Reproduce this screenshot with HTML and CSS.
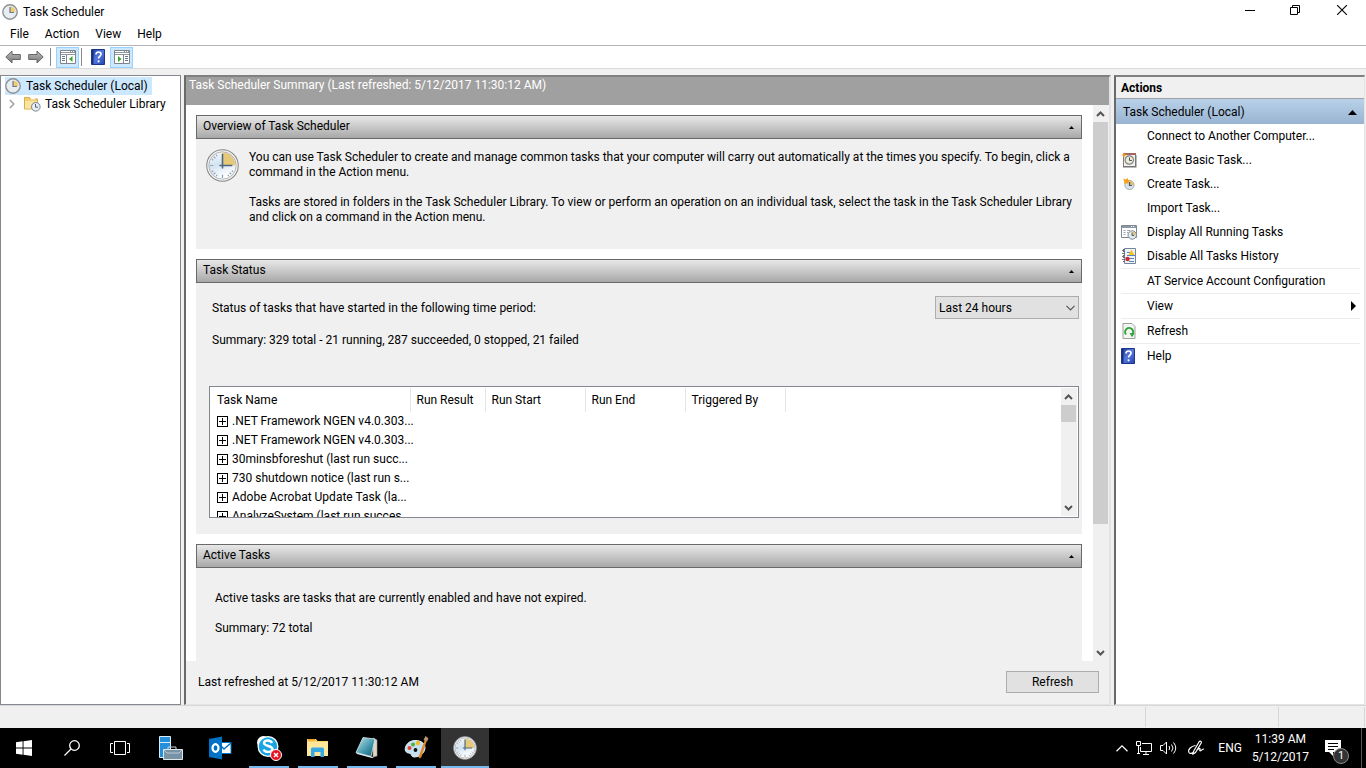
FILE: index.html
```html
<!DOCTYPE html>
<html lang="en">
<head>
  <meta charset="UTF-8" />
  <meta name="viewport" content="width=device-width, initial-scale=1.0" />
  <title>Task Scheduler</title>
  <link rel="stylesheet" href="styles.css">
</head>
<body>
  <!-- shared icons -->
  <svg class="defs" width="0" height="0" aria-hidden="true">
    <defs>
      <linearGradient id="face" x1="0" y1="0" x2="0.4" y2="1">
        <stop offset="0" stop-color="#fff" />
        <stop offset="0.5" stop-color="#d3e3f1" />
        <stop offset="1" stop-color="#fff" />
      </linearGradient>
      <linearGradient id="arrow" x1="0" y1="0" x2="0" y2="1">
        <stop offset="0" stop-color="#bbb" />
        <stop offset="1" stop-color="#777" />
      </linearGradient>
      <linearGradient id="blue" x1="0" y1="0" x2="1" y2="1">
        <stop offset="0" stop-color="#1c3c9c" />
        <stop offset="0.5" stop-color="#5578dd" />
        <stop offset="1" stop-color="#2343ad" />
      </linearGradient>
      <linearGradient id="note" x1="0" y1="0" x2="1" y2="1">
        <stop offset="0" stop-color="#c5e6ec" />
        <stop offset="0.6" stop-color="#3c93a8" />
        <stop offset="1" stop-color="#175a70" />
      </linearGradient>
    </defs>
    <symbol id="clock" viewBox="0 0 32 32">
      <circle cx="16" cy="16" r="15.3" fill="#f4f4f4" stroke="#858585" stroke-width="1" />
      <circle cx="16" cy="16" r="13.3" fill="url(#face)" stroke="#a5a5a5" stroke-width="0.8" />
      <path d="M16 16V3.500A12.500 12.500 0 0 1 28.500 16z" fill="#e7c878" />
      <path d="M16 25v3M4 16h3M7.500 7.500l1.600 1.600M7.500 24.500l1.600-1.600M24.500 24.500l-1.600-1.600M10 5.600l.8 1.400M5.600 10l1.400.8M5.600 22l1.400-.8M10 26.400l.8-1.400M22 26.400l-.8-1.400M26.400 22l-1.400-.8" stroke="#8ba3b8" stroke-width="1.200" />
      <path d="M16 4.500v14.500M13 16h12.500" stroke="#4a6681" stroke-width="1.500" />
    </symbol>
    <symbol id="clock-sm" viewBox="0 0 16 16">
      <circle cx="8" cy="8" r="7.200" fill="#e6edf3" stroke="#909090" stroke-width="1.400" />
      <path d="M8 8V2.500A5.500 5.500 0 0 1 13.500 8z" fill="#edcb77" />
      <path d="M8 3v5.500h4" fill="none" stroke="#6b7a88" stroke-width="1.200" />
    </symbol>
    <symbol id="help" viewBox="0 0 14 16">
      <path d="M0.500 0.500h13v15h-13z" fill="url(#blue)" stroke="#1d3687" />
      <path d="M1 1h1.500v14H1z" fill="#16307f" />
      <path d="M5 5.500c0-3.300 5-3.300 5-.3 0 2-2.400 2-2.400 4.300" fill="none" stroke="#fff" stroke-width="1.700" />
      <circle cx="7.600" cy="12.300" r="1.100" fill="#fff" />
    </symbol>
    <symbol id="up" viewBox="0 0 9 6">
      <path d="M1 5l3.500-3.500L8 5" fill="none" stroke="#555" stroke-width="2" />
    </symbol>
    <symbol id="down" viewBox="0 0 9 6">
      <path d="M1 1l3.500 3.500L8 1" fill="none" stroke="#555" stroke-width="2" />
    </symbol>
  </svg>

  <header class="titlebar">
    <svg width="16" height="16"><use href="#clock-sm" /></svg>
    <h1>Task Scheduler</h1>
    <div class="window-buttons">
      <button aria-label="Minimize"><svg width="10" height="10"><path d="M0 5.500h10" stroke="#000" /></svg></button>
      <button aria-label="Restore"><svg width="10" height="10" fill="none" stroke="#000"><path d="M.5 2.500h7v7h-7zM2.500 2.500v-2h7v7h-2" /></svg></button>
      <button aria-label="Close"><svg width="10" height="10"><path d="M0 0l10 10M10 0L0 10" stroke="#000" stroke-width="1.100" /></svg></button>
    </div>
  </header>

  <nav class="menu">
    <button>File</button>
    <button>Action</button>
    <button>View</button>
    <button>Help</button>
  </nav>

  <div class="toolbar">
    <button aria-label="Back"><svg width="16" height="14"><path d="M.8 7L7 1v3.500h8.300v5H7V13z" fill="url(#arrow)" stroke="#666" /></svg></button>
    <button aria-label="Forward"><svg width="16" height="14"><path d="M15.200 7L9 1v3.500H.7v5H9V13z" fill="url(#arrow)" stroke="#666" /></svg></button>
    <span class="divider"></span>
    <button class="pressed" aria-label="Show or hide console tree">
      <svg width="16" height="14"><path d="M.5.5h15v13H.5z" fill="#fff" stroke="#7f858c" /><path d="M1 1h14v4H1z" fill="#8f969d" /><path d="M1 1.500h9M11 1.500h1M13 1.500h1M1 3.500h14" stroke="#fff" /><path d="M6.500 5v8" stroke="#7f858c" /><path d="M2 6.500h3M2 8.500h3M2 10.500h3" stroke="#65788d" /><path d="M12.500 6v6L9 9z" fill="#3da42c" /></svg>
    </button>
    <span class="divider"></span>
    <button aria-label="Help"><svg width="14" height="16"><use href="#help" /></svg></button>
    <button class="pressed" aria-label="Show or hide action pane">
      <svg width="16" height="14"><path d="M.5.5h15v13H.5z" fill="#fff" stroke="#7f858c" /><path d="M1 1h14v4H1z" fill="#8f969d" /><path d="M1 1.500h9M11 1.500h1M13 1.500h1M1 3.500h14" stroke="#fff" /><path d="M9.500 5v8" stroke="#7f858c" /><path d="M11 6.500h3M11 8.500h3M11 10.500h3" stroke="#65788d" /><path d="M4 6v6l3.500-3z" fill="#3da42c" /></svg>
    </button>
  </div>

  <main>
    <nav class="tree">
      <a class="node selected" href="#summary"><svg width="16" height="16"><use href="#clock-sm" /></svg>Task Scheduler (Local)</a>
      <div class="branch">
        <button aria-label="Expand"><svg width="6" height="10"><path d="M.8 1l4 4-4 4" fill="none" stroke="#a0a0a0" stroke-width="1.500" /></svg></button>
        <a class="node" href="#library">
          <svg width="17" height="16"><path d="M.5 1.500h5l1 1.500h7v10H.5z" fill="#f3cf72" stroke="#d8ad4c" /><path d="M1 5h12v7.500H1z" fill="#fbe3a0" /><path d="M7 2h4v1.500H7z" fill="#fff" /><circle cx="11.800" cy="10.800" r="4.300" fill="#e8eff5" stroke="#76828d" /><path d="M11.500 8v3.200H14" fill="none" stroke="#4c6074" /></svg>
          Task Scheduler Library
        </a>
      </div>
    </nav>

    <section class="summary" id="summary">
      <h2>Task Scheduler Summary (Last refreshed: 5/12/2017 11:30:12 AM)</h2>
      <div class="scroll-area">
        <div class="cards">
          <article class="card">
            <button class="card-header">Overview of Task Scheduler<svg width="5" height="3"><path d="M0 3h5L2.500 0z" /></svg></button>
            <div class="card-body overview">
              <svg width="33" height="33"><use href="#clock" /></svg>
              <div>
                <p>You can use Task Scheduler to create and manage common tasks that your computer will carry out automatically at the times you specify. To begin, click a command in the Action menu.</p>
                <p>Tasks are stored in folders in the Task Scheduler Library. To view or perform an operation on an individual task, select the task in the Task Scheduler Library and click on a command in the Action menu.</p>
              </div>
            </div>
          </article>

          <article class="card">
            <button class="card-header">Task Status<svg width="5" height="3"><path d="M0 3h5L2.500 0z" /></svg></button>
            <div class="card-body status">
              <div class="period">
                <label for="period">Status of tasks that have started in the following time period:</label>
                <div class="select">
                  <select id="period">
                    <option>Last 24 hours</option>
                  </select>
                  <svg width="9" height="6"><path d="M.5.8l4 4 4-4" fill="none" stroke="#555" stroke-width="1.200" /></svg>
                </div>
              </div>
              <p>Summary: 329 total - 21 running, 287 succeeded, 0 stopped, 21 failed</p>
              <div class="list">
                <table>
                  <thead>
                    <tr><th class="name">Task Name</th><th class="result">Run Result</th><th>Run Start</th><th>Run End</th><th>Triggered By</th><th class="rest"></th></tr>
                  </thead>
                  <tbody>
                    <tr><td><div><button aria-label="Expand"></button>.NET Framework NGEN v4.0.303...</div></td></tr>
                    <tr><td><div><button aria-label="Expand"></button>.NET Framework NGEN v4.0.303...</div></td></tr>
                    <tr><td><div><button aria-label="Expand"></button>30minsbforeshut (last run succ...</div></td></tr>
                    <tr><td><div><button aria-label="Expand"></button>730 shutdown notice (last run s...</div></td></tr>
                    <tr><td><div><button aria-label="Expand"></button>Adobe Acrobat Update Task (la...</div></td></tr>
                    <tr><td><div><button aria-label="Expand"></button>AnalyzeSystem (last run succes...</div></td></tr>
                  </tbody>
                </table>
                <div class="scrollbar">
                  <button aria-label="Scroll up"><svg width="9" height="6"><use href="#up" /></svg></button>
                  <div class="track"><div class="thumb short"></div></div>
                  <button aria-label="Scroll down"><svg width="9" height="6"><use href="#down" /></svg></button>
                </div>
              </div>
            </div>
          </article>

          <article class="card">
            <button class="card-header">Active Tasks<svg width="5" height="3"><path d="M0 3h5L2.500 0z" /></svg></button>
            <div class="card-body active">
              <p>Active tasks are tasks that are currently enabled and have not expired.</p>
              <p>Summary: 72 total</p>
            </div>
          </article>
        </div>
        <div class="scrollbar">
          <button aria-label="Scroll up"><svg width="9" height="6"><use href="#up" /></svg></button>
          <div class="track"><div class="thumb"></div></div>
          <button aria-label="Scroll down"><svg width="9" height="6"><use href="#down" /></svg></button>
        </div>
      </div>
      <footer>
        <span>Last refreshed at 5/12/2017 11:30:12 AM</span>
        <button>Refresh</button>
      </footer>
    </section>

    <aside class="actions">
      <h2>Actions</h2>
      <button class="group">Task Scheduler (Local)<svg width="9" height="5"><path d="M0 5h9L4.500 0z" /></svg></button>
      <ul>
        <li><button><span class="icon"></span>Connect to Another Computer...</button></li>
        <li><button><span class="icon"><svg width="16" height="16"><path d="M2.500 1.500h12v13h-12z" fill="#f3f0ec" stroke="#8e7770" /><path d="M3 1h12v2H3z" fill="#a3675a" /><path d="M14 3h1.500v12.500H2V14h12z" fill="#777" /><circle cx="8.300" cy="8" r="4.200" fill="#f1e9ce" stroke="#7d868e" stroke-width="1.200" /><path d="M8.500 5.500V8.500h2.300" fill="none" stroke="#3c5468" /><path d="M3 0l.8 2.200L6 3l-2.200.8L3 6l-.8-2.200L0 3l2.200-.8z" fill="#f2991e" /></svg></span>Create Basic Task...</button></li>
        <li><button><span class="icon"><svg width="16" height="16"><circle cx="8.500" cy="9" r="4.600" fill="#d6e1ec" stroke="#a9b0b6" /><path d="M8.500 9V5a4 4 0 0 1 4 4z" fill="#e9bd66" /><path d="M8.500 6v3.500H11" fill="none" stroke="#43586c" stroke-width="1.200" /><path d="M2 2.500l2.500 1L6.500 2l.7 2 2.300.5-2 1.500-.2 2-2-1-2.300 1 .3-2.500z" fill="#f5a01b" /></svg></span>Create Task...</button></li>
        <li><button><span class="icon"></span>Import Task...</button></li>
        <li><button><span class="icon"><svg width="16" height="16"><path d="M.5 1.500h15v12H.5z" fill="#fff" stroke="#7e8890" /><path d="M1 2h14v2H1z" fill="#8b99a7" /><path d="M10 2.500h1M12 2.500h1" stroke="#fff" /><path d="M2.500 6.500h2M6 6.500h3M2.500 8.500h2M6 8.500h1M2.500 10.500h2" stroke="#9aa5b0" /><circle cx="11.200" cy="11" r="4.200" fill="#e4ebef" stroke="#83898f" /><path d="M11.200 11V7.500a3.500 3.500 0 0 1 3.500 3.500z" fill="#ddc37c" /><path d="M11 8.500v3h2.200" fill="none" stroke="#4a6072" /></svg></span>Display All Running Tasks</button></li>
        <li><button><span class="icon"><svg width="16" height="16"><path d="M3.500.5h11v15h-11z" fill="#eef3fa" stroke="#73849b" /><path d="M3 1v14" stroke="#5d6a78" stroke-width="2" stroke-dasharray="1 1" /><path d="M1 2.500h2M1 5.500h2M1 8.500h2M1 11.500h2" stroke="#777" /><path d="M6 4.500h3M6 7.500h8M6 10.500h7M8 13.500h5" stroke="#5d83bd" /><path d="M10.500 1.500L13.500 7h-6z" fill="#f5c51e" /><circle cx="6.500" cy="11" r="2.200" fill="#d1272c" /></svg></span>Disable All Tasks History</button></li>
        <li class="separated"><button><span class="icon"></span>AT Service Account Configuration</button></li>
        <li class="separated"><button><span class="icon"></span>View<svg class="submenu" width="5" height="10"><path d="M0 0v10l5-5z" /></svg></button></li>
        <li class="separated"><button><span class="icon"><svg width="16" height="16"><path d="M2 .5h9l3 3v12H2z" fill="#f4f6f4" stroke="#9aa09a" /><path d="M5 11.500a4 4 0 1 1 6 .3" fill="none" stroke="#32a637" stroke-width="2" /><path d="M8.500 10l5 .2-2.500 4z" fill="#32a637" /></svg></span>Refresh</button></li>
        <li class="separated"><button><span class="icon"><svg width="14" height="16"><use href="#help" /></svg></span>Help</button></li>
      </ul>
    </aside>
  </main>

  <div class="statusbar"><span></span><span></span><span></span></div>

  <footer class="taskbar">
    <button aria-label="Start"><svg width="16" height="16" fill="#fff"><path d="M0 2.200l6.600-.9v6.200H0zM7.500 1.200L16 0v7.500H7.500zM0 8.400h6.600v6.300L0 13.800zM7.500 8.400H16V16l-8.500-1.200z" /></svg></button>
    <button aria-label="Search"><svg width="16" height="16" fill="none" stroke="#fff" stroke-width="1.300"><circle cx="10.500" cy="5.500" r="4.800" /><path d="M7 9L.5 15.500" /></svg></button>
    <button aria-label="Task view"><svg width="20" height="14" fill="none" stroke="#fff"><path d="M4.500.5h11v13h-11zM3 2.500H.5v9H3M17 2.500h2.500v9H17" /></svg></button>
    <div class="apps">
      <button aria-label="Server Manager"><svg width="24" height="24"><path d="M.5.5h11v21H.5z" fill="#2490dc" stroke="#d9ecf8" /><path d="M0 6.500h12" stroke="#d9ecf8" /><path d="M9 13v-2h8v2" fill="none" stroke="#c9d3da" /><path d="M4.500 13.500h19v10h-19z" fill="#7893a6" stroke="#dfe6ea" /><path d="M5 14l3 3h12l3-3" fill="none" stroke="#b9c8d2" /></svg></button>
      <button aria-label="Outlook"><svg width="24" height="24"><path d="M12 6.500h11v11H12z" fill="#fff" stroke="#0072c6" /><path d="M12 9l4 4 7-6" fill="none" stroke="#0072c6" stroke-width="1.500" /><path d="M1 3l13-2.500v23L1 21z" fill="#0072c6" /><ellipse cx="7.500" cy="12" rx="3" ry="3.800" fill="none" stroke="#fff" stroke-width="2.200" /></svg></button>
      <button class="open" aria-label="Skype">
        <svg width="26" height="26"><circle cx="7.500" cy="7.500" r="6.500" fill="#fff" /><circle cx="16" cy="16" r="6" fill="#fff" /><circle cx="12" cy="11.500" r="10.500" fill="#fff" /><circle cx="12" cy="11.500" r="9.200" fill="#18a5e4" /><path d="M16 8c-1-3-8-3.500-8 0s8.500 2.500 8.500 6-7.500 4-9 .5" fill="none" stroke="#fff" stroke-width="2.400" /><circle cx="20" cy="20" r="5.500" fill="#e81123" stroke="#fff" /><path d="M18 18l4 4M22 18l-4 4" stroke="#fff" stroke-width="1.500" /></svg>
      </button>
      <button class="open" aria-label="File Explorer"><svg width="24" height="20"><path d="M1 1h9l1.500 2H22v14H1z" fill="#f7d26c" /><path d="M1 4h21v14H1z" fill="#fee69a" /><path d="M2 1h7v1.500H2z" fill="#e8a41f" /><path d="M5 11q0-1.500 1.500-1.500h10q1.500 0 1.500 1.500v8h-3.500v-5h-6v5H5z" fill="#35a9e5" /></svg></button>
      <button class="open" aria-label="Notepad"><svg width="24" height="24"><path d="M18 2l4 2v16l-4 1z" fill="#ddd8c8" stroke="#9d9a90" stroke-width=".6" /><path d="M8 1.500L20 3l-4 17.500L1 16.500z" fill="url(#note)" stroke="#d5edf0" stroke-width=".8" /><path d="M1 16.500l15 4 3 1-2 .5-15-4z" fill="#e9f0f0" /></svg></button>
      <button class="open" aria-label="Paint"><svg width="25" height="24"><path d="M2 10C5 3 16 3 20 8c3 5-1 13-10 13-3 0-2-4-5-4s-5-3-3-7z" fill="#c4dff0" stroke="#e8f3fa" /><circle cx="5.500" cy="12" r="2" fill="#df4631" /><circle cx="9" cy="8.500" r="2" fill="#58ad38" /><circle cx="14" cy="7" r="2.200" fill="#f0bd2e" /><circle cx="11.500" cy="14" r="1.900" fill="#111" /><path d="M21 3.500L14.500 21l1 1.500 2-1.500L23 4z" fill="#dd862c" /><path d="M19.500 4l2-4 3 2.500-1.500 3z" fill="#b9956d" /></svg></button>
      <button class="open current" aria-label="Task Scheduler"><svg width="24" height="24"><use href="#clock" /></svg></button>
    </div>
    <div class="tray">
      <button aria-label="Show hidden icons"><svg width="12" height="7" fill="none" stroke="#fff" stroke-width="1.200"><path d="M.5 6.200L6 .8l5.500 5.400" /></svg></button>
      <button aria-label="Network"><svg width="16" height="14" fill="none" stroke="#fff"><path d="M6 2.500h9.500v8H4.500V6M7 13.500h6M10 11v2M.5.5h4v4h-4zM2.500 5v7M1 12.500h3" /></svg></button>
      <button aria-label="Volume"><svg width="17" height="14" fill="none" stroke="#fff"><path d="M.5 4.500H3L6.500 1v12L3 9.500H.5zM9 5q1.500 2 0 4M11.500 3.500q3 3.500 0 7M13.500 1.500q4.500 5.500 0 11" /></svg></button>
      <button class="pen" aria-label="Ink workspace"><svg width="17" height="16" fill="none" stroke="#fff" stroke-width="1.200"><path d="M5.500 11.500L11 2c1-1.500 3-.5 2.200 1L7.500 12.500l-2.500 1.500zM7.500 5.500C3 6-.5 10 1 12.500c1 1.500 3 1 4 0M9.500 10c1.500-2 3-2 2.500-.5s0 1.500 1 1 1.500-1.500 3-1.500" /></svg></button>
      <button class="lang">ENG</button>
      <button class="time">11:39 AM<br>5/12/2017</button>
      <button class="notifications" aria-label="1 new notification">
        <svg width="16" height="16"><path d="M0 0h16v12H8v4l-4-4H0z" fill="#fff" /><path d="M3 3.500h10M3 6.500h10M3 9.500h6" stroke="#000" /></svg>
        <span class="badge">1</span>
      </button>
      <span class="show-desktop"></span>
    </div>
  </footer>
</body>
</html>
```
FILE: styles.css
```css
* {
  box-sizing: border-box;
}
body {
  margin: 0;
  height: 100vh;
  display: flex;
  flex-direction: column;
  overflow: hidden;
  font-family: "Segoe UI", Roboto, "Open Sans", sans-serif;
  font-size: 12px;
  line-height: 15px;
  color: #000;
  background: #f0f0f0;
}
h1, h2, p, ul {
  margin: 0;
  padding: 0;
  font-size: 12px;
  font-weight: normal;
}
ul {
  list-style: none;
}
button {
  display: flex;
  align-items: center;
  padding: 0;
  border: none;
  background: none;
  font: inherit;
  color: inherit;
}
svg {
  flex: none;
}
a {
  color: inherit;
  text-decoration: none;
}
.defs {
  position: absolute;
}

/* title, menu, toolbar */
.titlebar {
  display: flex;
  align-items: center;
  gap: 5px;
  height: 24px;
  padding-left: 2px;
  background: #fff;
}
.window-buttons {
  display: flex;
  align-self: flex-start;
  margin-left: auto;
}
.window-buttons button {
  justify-content: center;
  width: 45px;
  height: 20px;
}
.window-buttons button:last-child {
  width: 49px;
}
.menu {
  display: flex;
  gap: 16px;
  height: 22px;
  padding: 0 10px;
  background: #fff;
  border-bottom: 1px solid #b5b5b9;
}
.toolbar {
  display: flex;
  align-items: center;
  height: 23px;
  padding-left: 1px;
  background: #fff;
  border-bottom: 1px solid #dadada;
}
.toolbar button {
  justify-content: center;
  width: 23px;
  height: 21px;
}
.toolbar .pressed {
  background: #cce8ff;
  border: 1px solid #99d1ff;
}
.divider {
  width: 1px;
  height: 18px;
  margin: 0 5px 0 3px;
  background: #8c8c8c;
}
.pressed + .divider {
  margin: 0 4px 0 2px;
}
.toolbar .pressed:last-child {
  margin-left: 1px;
}

/* three panes */
main {
  flex: 1;
  min-height: 0;
  display: flex;
  gap: 3px;
  padding: 6px 1px 0 0;
}
.tree {
  width: 181px;
  padding: 1px 4px;
  background: #fff;
  border: 1px solid #828790;
}
.node {
  display: flex;
  align-items: center;
  gap: 5px;
  width: fit-content;
  height: 18px;
  padding-right: 4px;
  white-space: nowrap;
}
.selected {
  background: #cce8ff;
}
.branch {
  display: flex;
  gap: 9px;
  padding-left: 4px;
}
.branch .node {
  gap: 4px;
}
.summary {
  flex: 1;
  min-width: 0;
  display: flex;
  flex-direction: column;
  border: 2px solid #696969;
  border-top-color: #808080;
  border-right-color: #e3e3e3;
  border-bottom: 1px solid #e3e3e3;
}
.summary h2 {
  height: 28px;
  padding: 1px 3px;
  color: #fff;
  background: #a0a0a0;
}
.scroll-area {
  flex: 1;
  min-height: 0;
  display: flex;
  background: #fff;
}
.cards {
  flex: 1;
  min-width: 0;
  display: flex;
  flex-direction: column;
  gap: 10px;
  padding: 10px 11px 0 10px;
  overflow: hidden;
}
.card {
  flex: none;
  background: #f0f0f0;
}
.card-header {
  justify-content: space-between;
  width: 100%;
  height: 24px;
  padding: 0 7px 2px 6px;
  border: 1px solid #696969;
  background: linear-gradient(#e8e8e8, #a8a8a8);
}
.card-header svg {
  margin-top: 3px;
}
.overview {
  display: flex;
  gap: 10px;
  padding: 10px 8px 24px 10px;
}
.overview p {
  padding-top: 1px;
}
.overview p + p {
  margin-top: 14px;
}
.status {
  padding: 13px 3px 16px 13px;
}
.period {
  display: flex;
  align-items: center;
  justify-content: space-between;
  padding-left: 3px;
}
.period label {
  padding-top: 2px;
}
.status p {
  margin: 14px 3px 38px;
}
.select {
  position: relative;
  width: 144px;
}
.select select {
  width: 100%;
  height: 23px;
  padding: 1px 3px 0;
  border: 1px solid #adadad;
  border-radius: 0;
  background: #e1e1e1;
  font: inherit;
  color: inherit;
  appearance: none;
}
.select svg {
  position: absolute;
  top: 9px;
  right: 4px;
}
.list {
  display: flex;
  height: 132px;
  padding: 1px 1px 1px 0;
  overflow: hidden;
  background: #fff;
  border: 1px solid #828790;
}
.list table {
  flex: 1;
  align-self: flex-start;
  width: 100%;
  table-layout: fixed;
  border-collapse: collapse;
}
.list th {
  width: 100px;
  height: 24px;
  padding: 0 0 0 6px;
  font-weight: normal;
  text-align: left;
  border-right: 1px solid #e5e5e5;
}
.list .name {
  width: 200px;
  padding-left: 7px;
}
.list .result {
  width: 75px;
}
.list .rest {
  width: auto;
  border: none;
}
.list td {
  height: 19px;
  padding: 0 0 0 7px;
  white-space: nowrap;
}
.list td div {
  display: flex;
  align-items: center;
  gap: 4px;
}
.list td button {
  flex: none;
  width: 11px;
  height: 11px;
  border: 1px solid #000;
  background:
    linear-gradient(#000, #000) center / 7px 1px no-repeat,
    linear-gradient(#000, #000) center / 1px 7px no-repeat;
}
.active {
  min-height: 130px;
  padding: 23px 19px;
}
.active p + p {
  margin-top: 15px;
}
.scrollbar {
  display: flex;
  flex-direction: column;
  flex: none;
  width: 16px;
  padding-right: 1px;
  background: #f0f0f0;
}
.scrollbar button {
  justify-content: center;
  height: 17px;
}
.track {
  flex: 1;
}
.thumb {
  height: 77%;
  background: #cdcdcd;
}
.thumb.short {
  height: 17px;
}
.summary footer {
  display: flex;
  align-items: center;
  justify-content: space-between;
  height: 43px;
  padding: 0 10px 1px 12px;
}
.summary footer button {
  justify-content: center;
  width: 93px;
  height: 22px;
  border: 1px solid #adadad;
  background: #e1e1e1;
}

/* actions pane */
.actions {
  width: 251px;
  background: #fff;
  border: 2px solid #696969;
  border-top-color: #808080;
  border-right: 1px solid #e3e3e3;
  border-bottom: 1px solid #e3e3e3;
}
.actions h2 {
  height: 22px;
  padding: 4px 5px 2px;
  font-weight: bold;
  background: #f0f0f0;
  border-bottom: 1px solid #a0a0a0;
}
.group {
  justify-content: space-between;
  width: 100%;
  height: 25px;
  padding: 1px 7px 0;
  background: linear-gradient(#b9d1ea, #99b4d1);
}
.actions ul {
  padding: 0 4px 0 5px;
}
.actions li button {
  width: 100%;
  height: 24px;
  gap: 9px;
  white-space: nowrap;
}
.separated {
  border-top: 1px solid #ececec;
}
.icon {
  display: flex;
  width: 17px;
}
.submenu {
  margin: 0 4px 0 auto;
}

.statusbar {
  display: flex;
  justify-content: flex-end;
  height: 23px;
  padding: 1px 1px 1px 0;
  border-top: 1px solid #d7d7d7;
}
.statusbar span {
  width: 133px;
  border-right: 1px solid #d7d7d7;
}
.statusbar span:last-child {
  width: 86px;
}

/* taskbar */
.taskbar {
  display: flex;
  height: 40px;
  color: #fff;
  background: #000;
}
.taskbar > button, .apps button {
  justify-content: center;
  width: 48px;
  height: 40px;
}
.apps {
  display: flex;
  gap: 1px;
  padding-left: 3px;
}
.apps .open {
  background: linear-gradient(#76b9ed, #76b9ed) bottom / 40px 2px no-repeat;
}
.apps .current {
  background: linear-gradient(#76b9ed, #76b9ed) bottom / 100% 2px no-repeat #333;
}
.tray {
  display: flex;
  align-items: center;
  gap: 8px;
  margin-left: auto;
}
.tray .pen {
  margin: 0 5px 0 3px;
}
.time {
  margin: 0 8px 0 2px;
  text-align: center;
  line-height: 18px;
}
.notifications {
  position: relative;
  margin-right: 12px;
}
.badge {
  position: absolute;
  top: 8px;
  left: 8px;
  width: 16px;
  height: 16px;
  font-size: 11px;
  line-height: 14px;
  border: 1px solid #888;
  border-radius: 50%;
  background: #333;
}
.show-desktop {
  width: 5px;
  height: 40px;
  border-left: 1px solid #555;
}
```
